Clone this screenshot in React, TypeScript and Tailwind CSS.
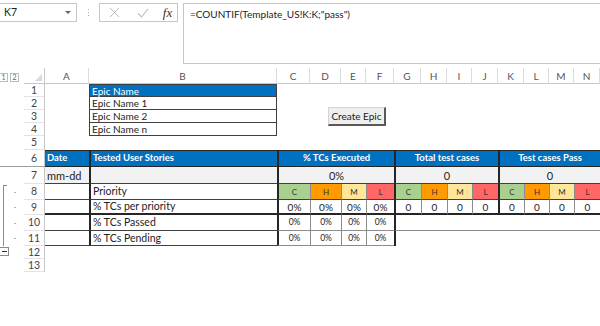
import type { ReactNode } from "react";

// column widths, px, as measured from the sheet
const W: Record<string, string> = {
  A: "w-[44px]",
  B: "w-[188px]",
  C: "w-[33px]",
  D: "w-[31px]",
  E: "w-[25px]",
  F: "w-[28px]",
  G: "w-[27px]",
  H: "w-[26px]",
  I: "w-[25px]",
  J: "w-[26px]",
  K: "w-[26px]",
  L: "w-[25px]",
  M: "w-[25px]",
  N: "w-[26px]",
};

const LETTERS = ["A", "B", "C", "D", "E", "F", "G", "H", "I", "J", "K", "L", "M", "N"];
const GROUPS = [
  ["C", "D", "E", "F"],
  ["G", "H", "I", "J"],
  ["K", "L", "M", "N"],
];
const PRIORITY = [
  { k: "C", bg: "bg-[#a9d08e]" },
  { k: "H", bg: "bg-[#ff9b00]" },
  { k: "M", bg: "bg-[#ffe699]" },
  { k: "L", bg: "bg-[#ff6666]" },
];

const hdrBlue = "bg-[#0070c0] text-white font-bold text-[9.5px] flex items-center shrink-0 border-y border-y-[#262626]";
const thickL = "border-l-2 border-l-[#262626]";
const thinL = "border-l border-l-[#8c8c8c]";
const darkB = "border-b border-b-[#404040]";
const thickB = "border-b-2 border-b-[#262626]";
const greyB = "border-b border-b-[#8c8c8c]";

type RowProps = {
  n?: number;
  h: string;
  gutter?: ReactNode;
  line?: boolean;
  children?: ReactNode;
};

const Row = ({ n, h, gutter, line, children }: RowProps) => (
  <div className={`flex ${h}`}>
    <div className={`w-[24px] shrink-0 flex ${line ? "border-b border-b-[#9c9c9c]" : ""}`}>{gutter}</div>
    <div
      className={`w-[21px] shrink-0 border-r border-r-[#c6c6c6] border-b flex items-center justify-center text-[10.5px] leading-none text-[#444] ${
        line ? "border-b-[#9c9c9c]" : "border-b-[#e3e3e3]"
      }`}
    >
      {n}
    </div>
    {children}
  </div>
);

const Bracket = ({ top }: { top?: boolean }) => (
  <>
    <div className={`ml-[3px] w-[4px] shrink-0 border-l border-l-[#8a8a8a] ${top ? "mt-[1px] border-t border-t-[#8a8a8a]" : ""}`} />
    <div className="ml-[7px] self-center w-[2px] h-[1px] bg-[#b4b4b4]" />
  </>
);

const FormulaBar = () => (
  <div className="flex items-start h-[68px] pt-[3px]">
    <div className="w-[77px] h-[19px] shrink-0 border border-l-0 border-[#c6c6c6] flex items-center justify-between pl-[4px] pr-[5px] text-[10.5px] text-[#222]">
      <span>K7</span>
      <span className="w-0 h-0 border-x-[3px] border-x-transparent border-t-[3px] border-t-[#666]" />
    </div>
    <div className="w-[22px] h-[19px] shrink-0 flex flex-col items-center justify-center gap-[2px]">
      <span className="w-[1px] h-[1px] bg-[#aaa]" />
      <span className="w-[1px] h-[1px] bg-[#aaa]" />
      <span className="w-[1px] h-[1px] bg-[#aaa]" />
    </div>
    <div className="w-[79px] h-[19px] shrink-0 border border-[#c6c6c6] flex items-center">
      <span className="w-[28px] flex justify-center">
        <svg width="11" height="11" viewBox="0 0 11 11" fill="none" stroke="#bdbdbd" strokeWidth="1">
          <path d="M1 1 L10 10 M10 1 L1 10" />
        </svg>
      </span>
      <span className="w-[30px] flex justify-center">
        <svg width="12" height="10" viewBox="0 0 12 10" fill="none" stroke="#bdbdbd" strokeWidth="1.1">
          <path d="M1 5.5 L4.5 9 L11 1" />
        </svg>
      </span>
      <span className="w-[19px] flex justify-center font-['Liberation_Serif',serif] italic text-[13px] leading-none text-[#333]">
        fx
      </span>
    </div>
    <div className="ml-[5px] flex-1 h-[61px] border border-r-0 border-[#c6c6c6] pl-[6px] pt-[5px] text-[10px] leading-none text-[#222]">
      =COUNTIF(Template_US!K:K;"pass")
    </div>
  </div>
);

const Sheet = () => (
  <div className="relative">
    {/* column headers */}
    <div className="flex h-[16px]">
      <div className="w-[24px] shrink-0 flex items-center gap-[2px] pt-[2px]">
        <span className="w-[8px] h-[9px] border border-l-0 border-[#bbb] flex items-center justify-center text-[7px] leading-none text-[#666]">1</span>
        <span className="w-[9px] h-[9px] border border-[#bbb] flex items-center justify-center text-[7px] leading-none text-[#666]">2</span>
      </div>
      <div className="w-[21px] shrink-0 border-r border-b border-r-[#c6c6c6] border-b-[#c6c6c6] flex items-end justify-end pr-[2px] pb-[2px]">
        <span className="w-0 h-0 border-l-[7px] border-l-transparent border-b-[7px] border-b-[#d9d9d9]" />
      </div>
      {LETTERS.map((l) => (
        <div
          key={l}
          className={`${W[l]} shrink-0 border-r border-r-[#dcdcdc] border-b border-b-[#c6c6c6] flex items-center justify-center text-[10px] leading-none text-[#555]`}
        >
          {l}
        </div>
      ))}
    </div>

    {/* epic list */}
    {["Epic Name", "Epic Name 1", "Epic Name 2", "Epic Name n"].map((t, i) => (
      <Row key={t} n={i + 1} h="h-[13px]">
        <div className={`${W.A} shrink-0`} />
        <div
          className={`${W.B} shrink-0 border-x border-b border-[#404040] pl-[2px] flex items-center text-[10px] leading-none ${
            i === 0 ? "border-t bg-[#0070c0] text-white" : "text-[#1e1e1e]"
          }`}
        >
          {t}
        </div>
      </Row>
    ))}
    <Row n={5} h="h-[14px]" />

    {/* report table */}
    <Row n={6} h="h-[17px]" line>
      <div className={`${W.A} ${hdrBlue} pl-[2px]`}>Date</div>
      <div className={`${W.B} ${hdrBlue} ${thickL} pl-[2px]`}>Tested User Stories</div>
      <div className={`w-[117px] ${hdrBlue} ${thickL} justify-center`}>% TCs Executed</div>
      <div className={`w-[104px] ${hdrBlue} ${thickL} justify-center`}>Total test cases</div>
      <div className={`w-[102px] ${hdrBlue} ${thickL} justify-center`}>Test cases Pass</div>
    </Row>

    <Row n={7} h="h-[17px]">
      <div className={`${W.A} shrink-0 bg-[#f2f2f2] ${darkB} pl-[2px] flex items-center text-[11px] leading-none`}>mm-dd</div>
      <div className={`${W.B} shrink-0 bg-[#f2f2f2] ${darkB} ${thickL}`} />
      <div className={`w-[117px] shrink-0 bg-[#f2f2f2] ${darkB} ${thickL} flex items-center justify-center text-[11px] leading-none`}>0%</div>
      <div className={`w-[104px] shrink-0 bg-[#f2f2f2] ${darkB} ${thickL} flex items-center justify-center text-[11px] leading-none`}>0</div>
      <div className={`w-[102px] shrink-0 bg-[#f2f2f2] ${darkB} ${thickL} flex items-center justify-center text-[11px] leading-none`}>0</div>
    </Row>

    <Row n={8} h="h-[16px]" gutter={<Bracket top />}>
      <div className={`${W.A} shrink-0 ${darkB}`} />
      <div className={`${W.B} shrink-0 ${darkB} ${thickL} pl-[2px] flex items-center text-[10.5px] leading-none`}>Priority</div>
      {GROUPS.map((g) =>
        g.map((l, i) => (
          <div
            key={l}
            className={`${W[l]} shrink-0 ${PRIORITY[i].bg} ${darkB} ${i === 0 ? thickL : thinL} flex items-center justify-center text-[8px] leading-none text-[#333]`}
          >
            {PRIORITY[i].k}
          </div>
        ))
      )}
    </Row>

    <Row n={9} h="h-[15px]" gutter={<Bracket />}>
      <div className={`${W.A} shrink-0 ${thickB}`} />
      <div className={`${W.B} shrink-0 ${thickB} ${thickL} pl-[2px] flex items-center text-[10.5px] leading-none`}>% TCs per priority</div>
      {GROUPS.map((g, gi) =>
        g.map((l, i) => (
          <div
            key={l}
            className={`${W[l]} shrink-0 ${thickB} ${i === 0 ? thickL : thinL} flex items-center justify-center text-[10px] leading-none`}
          >
            {gi === 0 ? "0%" : "0"}
          </div>
        ))
      )}
    </Row>

    {["% TCs Passed", "% TCs Pending"].map((t, ri) => (
      <Row key={t} n={10 + ri} h={ri === 0 ? "h-[16px]" : "h-[15px]"} gutter={<Bracket />}>
        <div className={`${W.A} shrink-0 ${darkB}`} />
        <div className={`${W.B} shrink-0 ${darkB} ${thickL} pl-[2px] flex items-center text-[10.5px] leading-none`}>{t}</div>
        {GROUPS[0].map((l, i) => (
          <div
            key={l}
            className={`${W[l]} shrink-0 ${greyB} ${i === 0 ? thickL : thinL} flex items-center justify-center text-[8.5px] leading-none`}
          >
            0%
          </div>
        ))}
        <div className={`w-[206px] shrink-0 ${thickL} ${ri === 0 ? greyB : ""}`} />
      </Row>
    ))}

    <Row
      n={12}
      h="h-[13px]"
      gutter={
        <div className="mt-[1px] w-[9px] h-[9px] border border-l-0 border-[#8a8a8a] flex items-center justify-center">
          <span className="w-[5px] h-[1px] bg-[#333]" />
        </div>
      }
    />
    <Row n={13} h="h-[13px]" />

    {/* form control button sitting over the cells */}
    <button className="absolute left-[328px] top-[39px] w-[58px] h-[19px] whitespace-nowrap bg-[#efefef] border border-[#d4d4d4] border-r-2 border-b-2 border-r-[#595959] border-b-[#595959] text-[10px] leading-none text-[#222]">
      Create Epic
    </button>
  </div>
);

export default function App() {
  return (
    <div className="w-[600px] h-[326px] overflow-hidden bg-white font-['Lato',sans-serif] text-[#1e1e1e]">
      <FormulaBar />
      <Sheet />
    </div>
  );
}
